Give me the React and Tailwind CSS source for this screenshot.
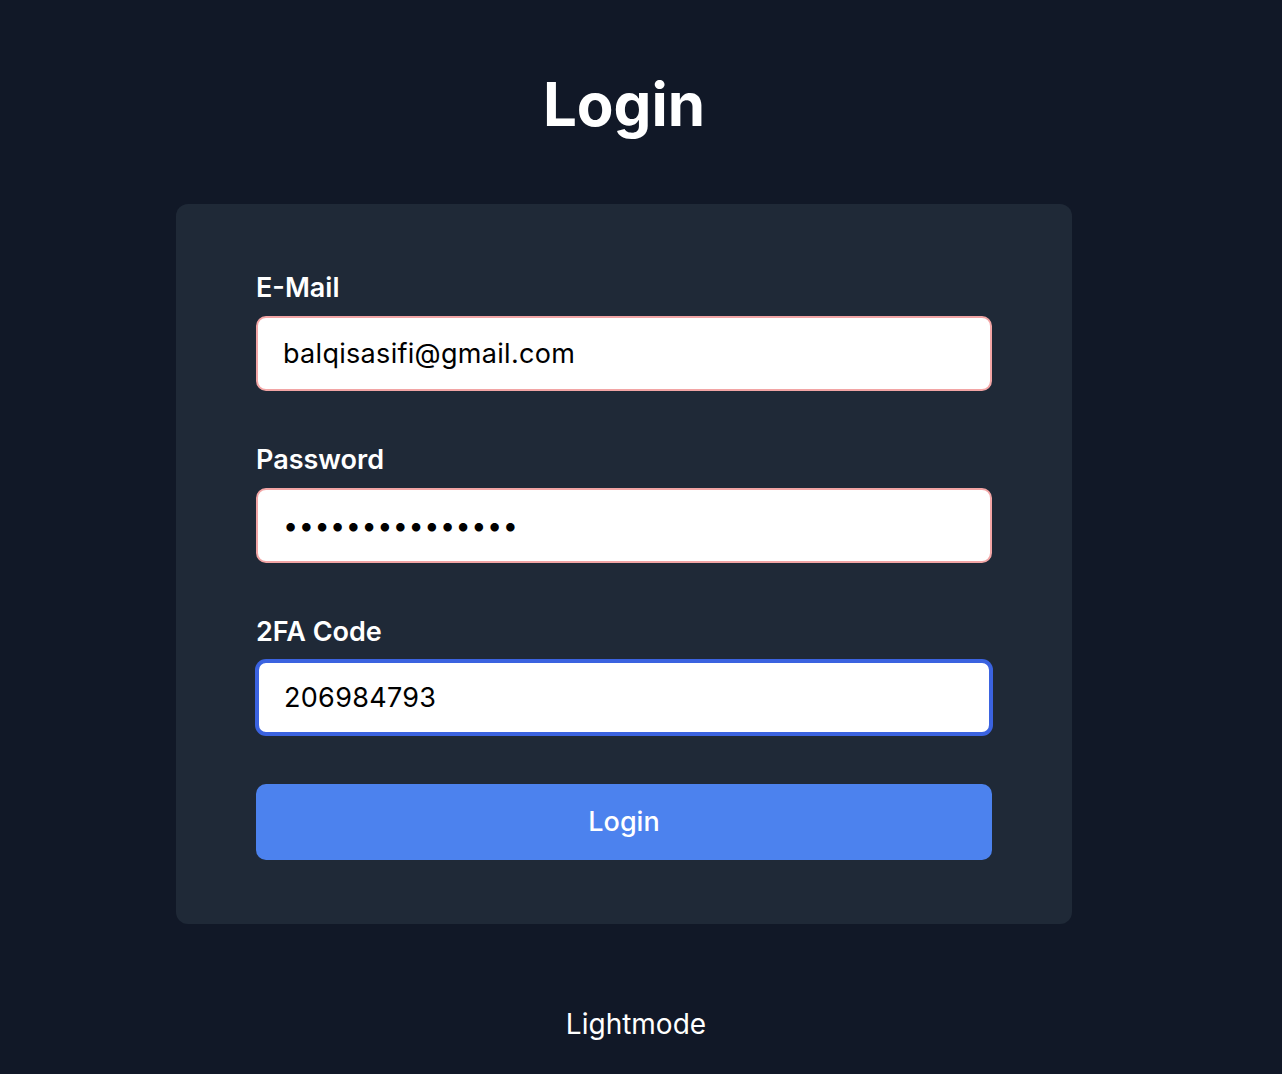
import React from "react";

function Field({ label, value, type = "text", focused = false, className = "" }) {
  return (
    <div className={"flex flex-col " + className}>
      <label className="text-[27px] font-semibold text-white leading-[39px]">{label}</label>
      <input
        type={type}
        defaultValue={value}
        readOnly
        className={
          "mt-[9px] h-[75px] w-full rounded-[10px] bg-white px-[25px] text-[27px] text-black outline-none " +
          (type === "password" ? "tracking-[0.5px] " : "tracking-[0.3px] ") +
          (focused
            ? "border-[3px] border-[#3b63e0] ring-1 ring-[#3b63e0]"
            : "border-2 border-[#f2a5a5]")
        }
        style={{ fontFamily: "Inter, 'Noto Sans', sans-serif" }}
      />
    </div>
  );
}

export default function App() {
  return (
    <div
      className="min-h-[1074px] w-full bg-[#111827] text-white"
      style={{ fontFamily: "Inter, 'Noto Sans', sans-serif" }}
    >
      <div className="flex w-[1248px] flex-col items-center">
        <h1 className="mt-[74px] text-[60px] font-bold leading-[60px]">Login</h1>
        <div className="mt-[70px] w-[896px] rounded-[12px] bg-[#1f2937] px-20 pt-[64px] pb-[64px]">
          <Field label="E-Mail" value="balqisasifi@gmail.com" />
          <Field className="mt-[49px]" label="Password" type="password" value="balqisasifi1234" />
          <Field className="mt-[49px]" label="2FA Code" value="206984793" focused />
          <button className="mt-[49px] h-[76px] w-full rounded-[10px] bg-[#4c82ee] text-[27px] font-medium text-white">
            Login
          </button>
        </div>
      </div>
      <div className="flex w-[1272px] justify-center">
        <button className="mt-[81px] text-[28px] leading-[39px] text-white">Lightmode</button>
      </div>
    </div>
  );
}
